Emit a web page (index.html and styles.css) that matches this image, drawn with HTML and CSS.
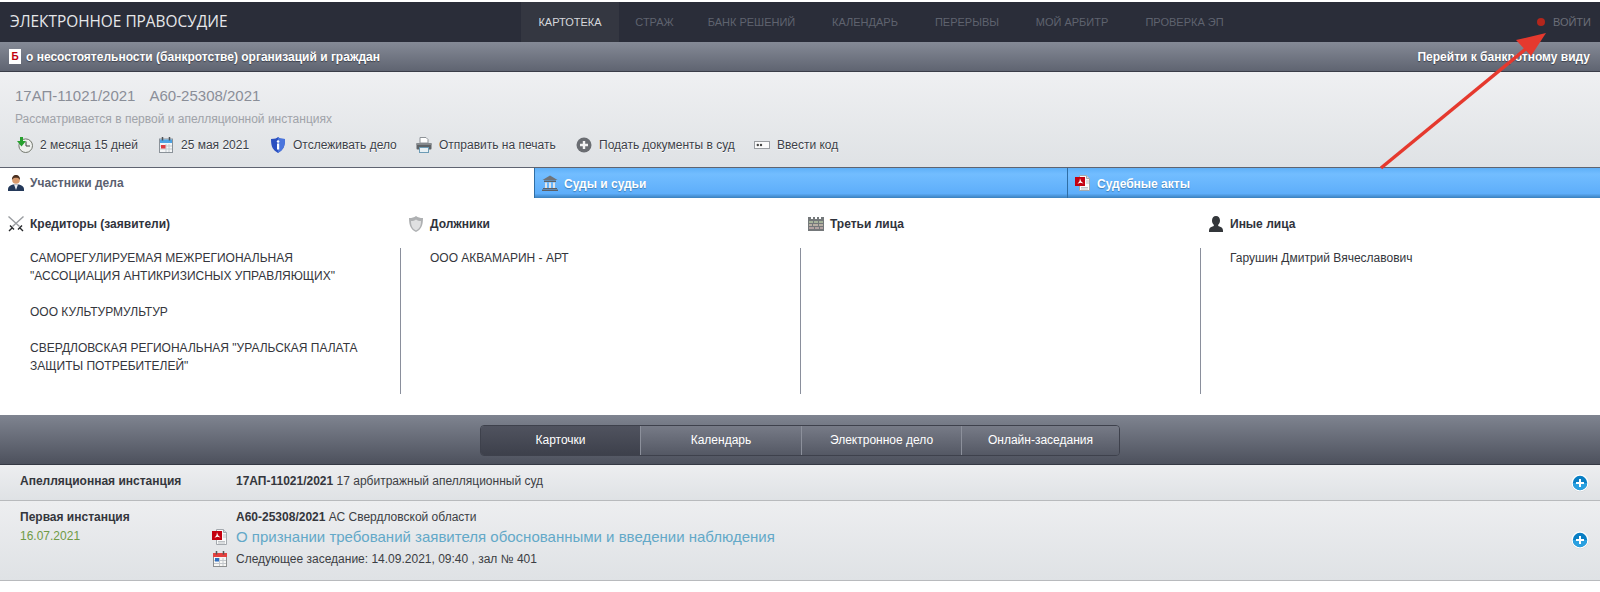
FILE: index.html
```html
<!DOCTYPE html>
<html lang="ru">
<head>
<meta charset="utf-8">
<title>Электронное правосудие</title>
<link rel="stylesheet" href="styles.css">
</head>
<body>
<svg class="defs" width="0" height="0" aria-hidden="true">
  <symbol id="pdf" viewBox="0 0 16 16">
    <path d="M4.500.5h7l3 3v12h-10z" fill="#f8f9f9" stroke="#a4a9ae"/>
    <path d="M11.500.5v3h3" fill="#d5d8db" stroke="#a4a9ae"/>
    <rect x="0" y="2" width="10" height="9" fill="#c4000f"/>
    <path d="M5 3.200 6 6.200l2.500 2.300-3-.7-3 1 2-2.600z" fill="#fff"/>
    <path d="M6 12.500h7M6 14h7M11 6h3M11 8h3" stroke="#bcc0c4"/>
  </symbol>
  <symbol id="plusblue" viewBox="0 0 18 18">
    <circle cx="9" cy="9.500" r="8.500" fill="#cfd1d4"/>
    <circle cx="9" cy="9" r="8.500" fill="#fff"/>
    <circle cx="9" cy="9" r="7.200" fill="#0a7fc4"/>
    <path d="M1.800 9h14.400a7.200 7.200 0 0 1-14.400 0z" fill="#2aa0e0"/>
    <path d="M9 5v8M5 9h8" stroke="#fff" stroke-width="2"/>
  </symbol>
</svg>

<header class="topbar">
  <div class="brand">ЭЛЕКТРОННОЕ ПРАВОСУДИЕ</div>
  <nav class="mainnav">
    <a class="navlink active">КАРТОТЕКА</a>
    <a class="navlink nav-guard">СТРАЖ</a>
    <a class="navlink nav-bank">БАНК РЕШЕНИЙ</a>
    <a class="navlink nav-cal">КАЛЕНДАРЬ</a>
    <a class="navlink nav-breaks">ПЕРЕРЫВЫ</a>
    <a class="navlink nav-my">МОЙ АРБИТР</a>
    <a class="navlink nav-check">ПРОВЕРКА ЭП</a>
  </nav>
  <a class="login"><span class="dot"></span>ВОЙТИ</a>
</header>

<div class="subbar">
  <div class="subleft">
    <span class="bicon">Б</span>
    <span>о несостоятельности (банкротстве) организаций и граждан</span>
  </div>
  <a class="subright">Перейти к банкротному виду</a>
</div>

<section class="casehead">
  <h1 class="casetitle"><span>17АП-11021/2021</span><span>А60-25308/2021</span></h1>
  <p class="casesub">Рассматривается в первой и апелляционной инстанциях</p>
  <ul class="actions">
    <li class="act act-clock">
      <svg class="ico16" viewBox="0 0 16 16"><circle cx="8.700" cy="8.700" r="6.800" fill="#eef0ee" stroke="#74786f"/><path d="M9 4.500v4.500h4" fill="none" stroke="#3f423f" stroke-width="1"/><path d="M3 0h3v4h3L4.500 9.500 0 4h3z" fill="#27a02e"/></svg>
      2 месяца 15 дней
    </li>
    <li class="act act-date">
      <svg class="ico16" viewBox="0 0 16 16"><rect x="1.500" y="2" width="13" height="13.500" fill="#f4f6f7" stroke="#8b9299"/><rect x="2" y="2.500" width="12" height="3.500" fill="#4da3e4"/><path d="M4.500 0v3.500M11.500 0v3.500" stroke="#4c5258" stroke-width="1.500"/><path d="M2 9h12M2 12h12M8 7v8M11 7v8" stroke="#c2c9cf"/><rect x="3" y="8" width="4.500" height="3.500" fill="#dd3a40"/></svg>
      25 мая 2021
    </li>
    <li class="act act-track">
      <svg class="ico16" viewBox="0 0 16 16"><path d="M8 0c1 1 3 2 7 2 0 8-2 11-7 14C3 13 1 10 1 2c4 0 6-1 7-2z" fill="#2b50c0"/><path d="M8 0c1 1 3 2 7 2 0 8-2 11-7 14z" fill="#4a75dd"/><rect x="7" y="6.500" width="2.200" height="6" fill="#fff"/><circle cx="8.100" cy="4.500" r="1.300" fill="#fff"/></svg>
      Отслеживать дело
    </li>
    <li class="act act-print">
      <svg class="ico16" viewBox="0 0 16 16"><path d="M4 .5h6l2 2V6H4z" fill="#fff" stroke="#8e9398"/><rect x="0.500" y="6" width="15" height="6.500" rx="1" fill="#5f6367"/><rect x="0.500" y="6" width="15" height="2" fill="#85898d"/><rect x="3.500" y="10.500" width="9" height="5" fill="#e8f0f4" stroke="#6c9bb5"/></svg>
      Отправить на печать
    </li>
    <li class="act act-submit">
      <svg class="ico16" viewBox="0 0 16 16"><circle cx="8" cy="8" r="7.500" fill="#6a6d72"/><path d="M8 4v8M4 8h8" stroke="#f2f2f2" stroke-width="2.400"/></svg>
      Подать документы в суд
    </li>
    <li class="act act-code">
      <svg class="ico16" viewBox="0 0 16 16"><rect x="0.500" y="4.500" width="15" height="7" fill="#fbfbfb" stroke="#9a9da1"/><circle cx="3.800" cy="8" r="1.200" fill="#444"/><circle cx="7" cy="8" r="1.200" fill="#444"/></svg>
      Ввести код
    </li>
  </ul>
</section>

<div class="tabs">
  <div class="tab current">
    <svg class="ico16" viewBox="0 0 16 16"><path d="M0 16v-2c0-2.500 2-3.500 5-4.500h6c3 1 5 2 5 4.500v2z" fill="#24395a"/><path d="M6 9.500 8 15l2-5.500z" fill="#e8ecf2"/><circle cx="8" cy="5" r="3.800" fill="#d89a6d"/><path d="M4 5C3.700 2 5.500 0 8 0s4.300 2 4 5c-.8-1.700-2-2.300-4-2.300S4.800 3.300 4 5z" fill="#4a3020"/></svg>
    Участники дела
  </div>
  <div class="tab blue">
    <svg class="ico16" viewBox="0 0 16 16"><path d="M8 .5 15.500 5H.5z" fill="#6f7378"/><path d="M2 5.500h12V7H2zM1 13h14v1H1zM0 14.500h16V16H0z" fill="#5d6166"/><path d="M3 7.500h2V13H3zM7 7.500h2V13H7zM11 7.500h2V13h-2z" fill="#e1e3e5"/></svg>
    <span class="tabtext">Суды и судьи</span>
  </div>
  <div class="tab blue">
    <svg class="ico16"><use href="#pdf"/></svg>
    <span class="tabtext">Судебные акты</span>
  </div>
</div>

<section class="parties">
  <div class="party">
    <h2 class="partyhead">
      <svg class="ico16" viewBox="0 0 16 16"><path d="M.5.500l11 10M15.500.5l-11 10" stroke="#9a9da1" stroke-width="1.400"/><path d="M10 13.500l4-4M2 9.500l4 4M1 15l3-3M15 15l-3-3" stroke="#26282b" stroke-width="1.400"/></svg>
      Кредиторы (заявители)
    </h2>
    <div class="partylist">
      <p>САМОРЕГУЛИРУЕМАЯ МЕЖРЕГИОНАЛЬНАЯ "АССОЦИАЦИЯ АНТИКРИЗИСНЫХ УПРАВЛЯЮЩИХ"</p>
      <p>ООО КУЛЬТУРМУЛЬТУР</p>
      <p>СВЕРДЛОВСКАЯ РЕГИОНАЛЬНАЯ "УРАЛЬСКАЯ ПАЛАТА ЗАЩИТЫ ПОТРЕБИТЕЛЕЙ"</p>
    </div>
  </div>
  <div class="party">
    <h2 class="partyhead">
      <svg class="ico16" viewBox="0 0 16 16"><path d="M8 0c2 1.500 4 2 7 2 0 8-2 11.500-7 14C3 13.500 1 10 1 2c3 0 5-.5 7-2z" fill="#aeb0b2"/><path d="M3 5c2 0 3.500-.5 5-1.500 1.500 1 3 1.500 5 1.500 0 5-1.500 7.500-5 9.500C4.500 12.500 3 10 3 5z" fill="#dfe0e1"/></svg>
      Должники
    </h2>
    <div class="partylist"><p>ООО АКВАМАРИН - АРТ</p></div>
  </div>
  <div class="party">
    <h2 class="partyhead">
      <svg class="ico16" viewBox="0 0 16 16"><path d="M0 1h3v2h2V1h2v2h2V1h2v2h2V1h3v14H0z" fill="#74787a"/><path d="M1 5h4v2H1zM6 5h4v2H6zM11 5h4v2h-4z" fill="#a6b39a"/><path d="M1 8h3v2H1zM5 8h5v2H5zM11 8h4v2h-4z" fill="#b8b0a4"/><path d="M1 11h5v2H1zM7 11h4v2H7zM12 11h3v2h-3z" fill="#b3a2a2"/></svg>
      Третьи лица
    </h2>
    <div class="partylist"></div>
  </div>
  <div class="party">
    <h2 class="partyhead">
      <svg class="ico16" viewBox="0 0 16 16"><path d="M8 0c2.500 0 4 1.800 4 4.500 0 2-.8 3.500-1.800 4.300v1.200c2.800.8 4.800 1.800 4.800 4.500V16H1v-1.500C1 11.800 3 10.800 5.800 10V8.800C4.800 8 4 6.500 4 4.500 4 1.800 5.500 0 8 0z" fill="#33363a"/></svg>
      Иные лица
    </h2>
    <div class="partylist"><p>Гарушин Дмитрий Вячеславович</p></div>
  </div>
</section>

<div class="switchbar">
  <div class="switch">
    <a class="swbtn on">Карточки</a>
    <a class="swbtn sw-cal">Календарь</a>
    <a class="swbtn sw-file">Электронное дело</a>
    <a class="swbtn sw-online">Онлайн-заседания</a>
  </div>
</div>

<div class="inst inst-a">
  <div class="instname"><b>Апелляционная инстанция</b></div>
  <div class="instbody"><div class="instline"><b>17АП-11021/2021</b> 17 арбитражный апелляционный суд</div></div>
  <svg class="plus"><use href="#plusblue"/></svg>
</div>
<div class="inst inst-b">
  <div class="instname"><b>Первая инстанция</b><span class="instdate">16.07.2021</span></div>
  <div class="instbody">
    <div class="instline"><b>А60-25308/2021</b> АС Свердловской области</div>
    <div class="doc">
      <svg class="docicon"><use href="#pdf"/></svg>
      <a class="doclink">О признании требований заявителя обоснованными и введении наблюдения</a>
    </div>
    <div class="next">
      <svg class="docicon" viewBox="0 0 16 16"><rect x="1.500" y="2.500" width="13" height="13" fill="#f7f7f5" stroke="#8d8f8f"/><rect x="1" y="2" width="14" height="4" fill="#e4413f"/><path d="M4.500 0v3.500M11.500 0v3.500" stroke="#555" stroke-width="1.500"/><path d="M2 9.500h12M2 12.500h12M7.500 7v8M11 7v8" stroke="#c3c7cb"/><rect x="3" y="7" width="4" height="3.500" fill="#2f6fc0"/></svg>
      Следующее заседание: 14.09.2021, 09:40 , зал № 401
    </div>
  </div>
  <svg class="plus"><use href="#plusblue"/></svg>
</div>

<svg class="arrow" width="1600" height="592" viewBox="0 0 1600 592" aria-hidden="true">
  <path d="M1381 168 1528 47" stroke="#e5392e" stroke-width="3.500" fill="none"/>
  <path d="M1546 33 1516 40 1531 56z" fill="#e5392e"/>
</svg>
</body>
</html>
```
FILE: styles.css
```css
* { box-sizing: border-box; }
html, body { margin: 0; padding: 0; }
body {
  position: relative;
  padding-top: 2px;
  min-height: 592px;
  background: #fff;
  font: 12px/18px "Liberation Sans", Arial, sans-serif;
  color: #333;
}
.defs { display: block; height: 0; }
.ico16 { width: 16px; height: 16px; flex: none; }

/* top navigation */
.topbar {
  display: flex;
  align-items: stretch;
  height: 40px;
  padding-left: 10px;
  background: #2a2d39;
}
.brand {
  width: 511px;
  font: 15.400px/40px "Open Sans", sans-serif;
  color: #e6e7ea;
}
.mainnav { display: flex; }
.navlink {
  font-size: 11px;
  line-height: 40px;
  text-align: center;
  color: #5f636f;
}
.navlink.active { width: 98px; background: #343741; color: #d6d8dc; }
.nav-guard { width: 71px; }
.nav-bank { width: 123px; }
.nav-cal { width: 104px; }
.nav-breaks { width: 100px; }
.nav-my { width: 110px; }
.nav-check { width: 115px; }
.login {
  display: flex;
  align-items: center;
  gap: 8px;
  margin-left: auto;
  padding-right: 9px;
  font-size: 11px;
  color: #6a6d78;
}
.dot { width: 8px; height: 8px; border-radius: 50%; background: #b3261c; }

/* section bar */
.subbar {
  display: flex;
  justify-content: space-between;
  align-items: center;
  height: 30px;
  padding: 0 10px 0 9px;
  background: linear-gradient(#858a96, #5f6471);
  border-bottom: 1px solid #3a3d48;
  font-weight: bold;
  color: #fff;
  text-shadow: 0 1px 1px #3c3f4a;
}
.subleft { display: flex; align-items: center; gap: 5px; }
.bicon {
  width: 12px;
  height: 15px;
  background: #fff;
  color: #c00010;
  font-size: 10px;
  line-height: 16px;
  text-align: center;
  text-shadow: none;
}

/* case header */
.casehead {
  height: 96px;
  padding: 14px 15px 0;
  background: linear-gradient(#eff0f2, #dfe2e5);
  border-bottom: 1px solid #5f6471;
}
.casetitle {
  display: flex;
  gap: 14px;
  margin: 0;
  font-size: 15px;
  font-weight: normal;
  line-height: 20px;
  color: #8a8e98;
}
.casesub { margin: 5px 0 0; line-height: 16px; color: #a0a3a9; }
.actions { display: flex; margin: 9px 0 0; padding: 0; list-style: none; }
.act {
  display: flex;
  align-items: center;
  gap: 7px;
  height: 18px;
  white-space: nowrap;
  color: #3c3f48;
  text-shadow: 0 1px 0 #fff;
}
.act-clock { width: 143px; padding-left: 2px; }
.act-date { width: 112px; }
.act-track { width: 146px; }
.act-print { width: 160px; }
.act-submit { width: 178px; }

/* tabs */
.tabs { display: flex; height: 30px; }
.tab {
  display: flex;
  align-items: center;
  gap: 6px;
  width: 533px;
  padding: 0 0 0 8px;
  font-weight: bold;
  font-size: 12px;
}
.tab.current { width: 534px; color: #5b5f70; }
.tab.blue {
  background: linear-gradient(#5fb0f8 0, #72bdff 20%, #5eaefa 85%, #3a80bd 100%);
  color: #fff;
  text-shadow: 0 1px 1px #3f7fb8;
  box-shadow: inset 1px 0 0 #2f6ea5;
}
.tabtext { padding-top: 1px; }

/* parties */
.parties { display: flex; height: 217px; padding-top: 17px; }
.party { width: 400px; }
.partyhead {
  display: flex;
  align-items: center;
  gap: 6px;
  height: 18px;
  margin: 0;
  padding-left: 8px;
  font-size: 12px;
  font-weight: bold;
  color: #30333c;
}
.partylist {
  height: 146px;
  margin: 15px -1px 0 0;
  padding: 1px 30px 0;
  border-right: 1px solid #8a8f9c;
}
.party:last-child .partylist { border-right: 0; }
.partylist p { margin: 0 0 18px; color: #34363c; }

/* switch */
.switchbar {
  display: flex;
  justify-content: center;
  align-items: center;
  height: 50px;
  padding-top: 2px;
  background: linear-gradient(#7f8490, #4d515d);
  border-bottom: 1px solid #353843;
}
.switch {
  display: flex;
  width: 640px;
  height: 31px;
  border: 1px solid #3e414c;
  border-radius: 4px;
  overflow: hidden;
}
.swbtn {
  color: #fff;
  line-height: 29px;
  text-align: center;
  border-left: 1px solid #8c909b;
  background: linear-gradient(#777b87, #545864);
}
.swbtn.on { width: 159px; border-left: 0; background: linear-gradient(#50535f, #3d404b); }
.sw-cal { width: 161px; }
.sw-file { width: 160px; }
.sw-online { width: 158px; }

/* instances */
.inst {
  display: flex;
  background: linear-gradient(#edeef0, #dfe2e5);
  border-bottom: 1px solid #b8babd;
}
.inst-a { height: 36px; padding-bottom: 4px; align-items: center; }
.inst-b { height: 80px; padding-top: 7px; }
.instname {
  display: flex;
  flex-direction: column;
  width: 236px;
  padding-left: 20px;
  color: #34363c;
}
.instdate { margin-top: 1px; color: #6f9a45; }
.instbody { flex: 1; }
.instline { line-height: 18px; color: #3c3e44; }
.instline b { color: #34363c; }
.doc, .next { display: flex; align-items: center; margin-left: -24px; }
.docicon { width: 16px; height: 16px; flex: none; margin-right: 8px; }
.doc { height: 22px; }
.doclink { font-size: 15px; color: #63a8c8; }
.next { height: 22px; color: #3c3e44; }
.plus { width: 18px; height: 18px; flex: none; margin-right: 11px; }
.inst-a .plus { margin-top: 4px; }
.inst-b .plus { margin-top: 23px; }

/* annotation drawn on top of the screenshot */
.arrow { position: absolute; left: 0; top: 0; pointer-events: none; }
```
